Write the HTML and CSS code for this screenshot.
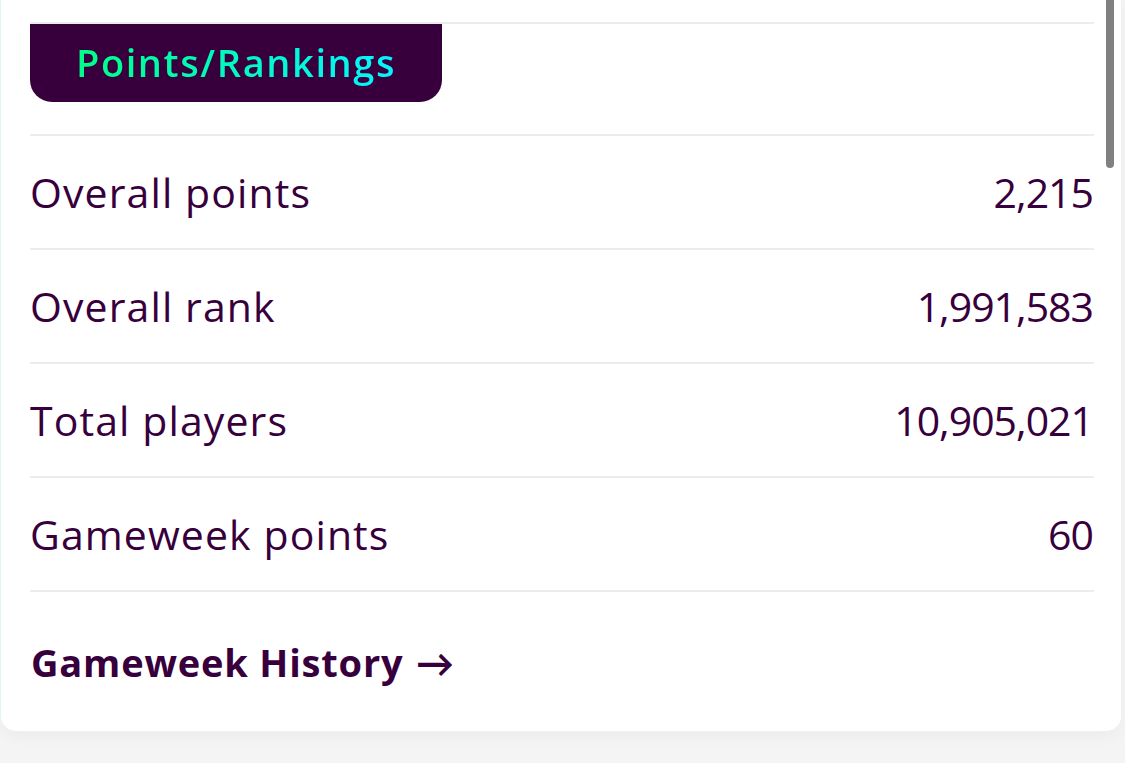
FILE: index.html
```html
<!DOCTYPE html>
<html lang="en">
<head>
<meta charset="utf-8">
<title>Points/Rankings</title>
<link rel="stylesheet" href="styles.css">
</head>
<body>
<div class="card">
  <div class="inner">
    <div class="divider"></div>
    <div class="tab"><span class="tab-label">Points/Rankings</span></div>
    <div class="divider gap"></div>
    <div class="row"><span class="label">Overall points</span><span class="value">2,215</span></div>
    <div class="divider"></div>
    <div class="row"><span class="label">Overall rank</span><span class="value">1,991,583</span></div>
    <div class="divider"></div>
    <div class="row"><span class="label">Total players</span><span class="value">10,905,021</span></div>
    <div class="divider"></div>
    <div class="row"><span class="label">Gameweek points</span><span class="value">60</span></div>
    <div class="divider"></div>
    <div class="footer"><a class="history" href="#">Gameweek History <span class="arrow">→</span></a></div>
  </div>
</div>
<div class="scrollbar"></div>
</body>
</html>
```
FILE: styles.css
```css
html, body {
  margin: 0;
  padding: 0;
}
body {
  background: #f4f4f5;
  font-family: "Open Sans", Lato, sans-serif;
  color: #37003c;
  height: 763px;
  overflow: hidden;
}
.card {
  width: 1122px;
  height: 732px;
  background: #ffffff;
  border-left: 1px solid #e3f4f6;
  border-right: 1px solid #eef2f6;
  border-bottom: 1px solid #eef0f4;
  border-radius: 0 0 16px 16px;
  box-sizing: border-box;
  box-shadow: 0 6px 14px rgba(0, 0, 0, 0.03);
}
.inner {
  padding: 22px 27px 0 29px;
}
.divider {
  height: 2px;
  background: #ececed;
}
.divider.gap {
  margin-top: 32px;
}
.tab {
  width: 412px;
  height: 78px;
  background: #37003c;
  border-radius: 0 0 22px 22px;
  display: flex;
  align-items: center;
  justify-content: center;
}
.tab-label {
  font-size: 38px;
  font-weight: 600;
  letter-spacing: 1.6px;
  background: linear-gradient(to right, #00ff87, #04f5ff);
  -webkit-background-clip: text;
  background-clip: text;
  color: transparent;
  padding-bottom: 2px;
}
.row {
  height: 112px;
  display: flex;
  align-items: center;
  justify-content: space-between;
  font-weight: 400;
  padding: 0 1px 0 0;
}
.label {
  font-size: 41px;
  letter-spacing: 1.1px;
}
.value {
  font-size: 41px;
  letter-spacing: -1px;
}
.footer {
  height: 140px;
  display: flex;
  align-items: center;
  padding-left: 1px;
}
.history {
  font-size: 38px;
  font-weight: 700;
  letter-spacing: 0.8px;
  color: #37003c;
  text-decoration: none;
}
.arrow {
  margin-left: 2px;
}
.scrollbar {
  position: absolute;
  top: -10px;
  left: 1106px;
  width: 8px;
  height: 178px;
  border-radius: 4px;
  background: #808080;
}
```
